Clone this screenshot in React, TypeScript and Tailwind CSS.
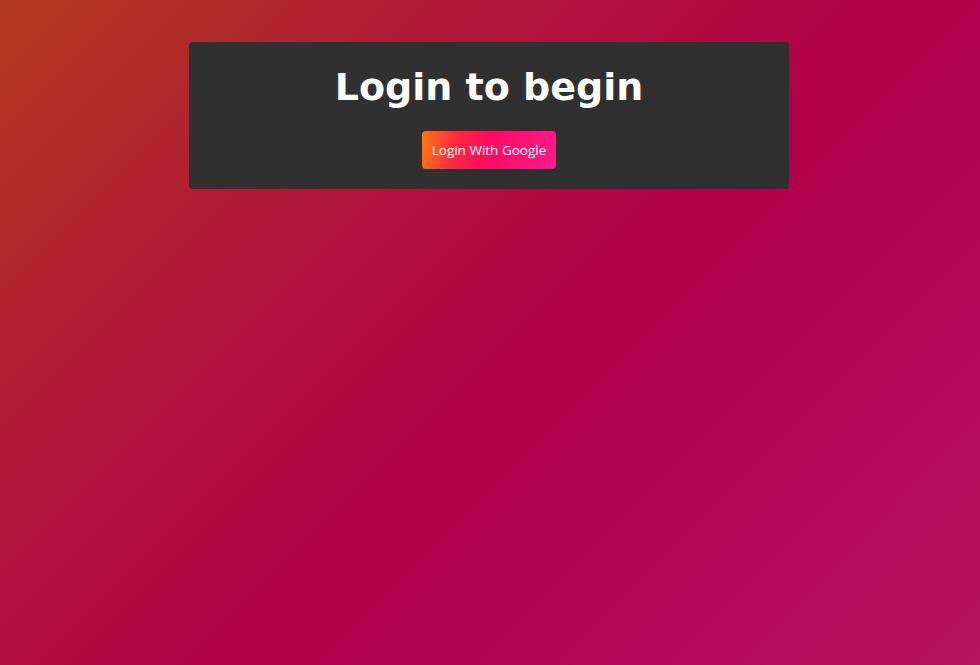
export default function App() {
  return (
    <div className="min-h-[665px] w-full bg-[linear-gradient(135deg,#b43b1c_0%,#b0173a_30%,#b00046_55%,#b3085a_80%,#b51460_100%)] pt-[42px]">
      <div className="mx-auto flex w-[600px] -translate-x-px flex-col items-center rounded bg-[#303030] pt-[19px] pb-[20px]">
        <h1 className="font-['DejaVu_Sans',sans-serif] text-[38px] leading-[52px] font-bold text-white">
          Login to begin
        </h1>
        <button className="mt-[18px] h-[38px] rounded-[4px] bg-[linear-gradient(100deg,#ff7a10_0%,#ff2a40_25%,#ff0a60_50%,#ff1a8c_100%)] px-[10px] font-['Open_Sans',sans-serif] text-[13.5px] text-white">
          Login With Google
        </button>
      </div>
    </div>
  );
}
